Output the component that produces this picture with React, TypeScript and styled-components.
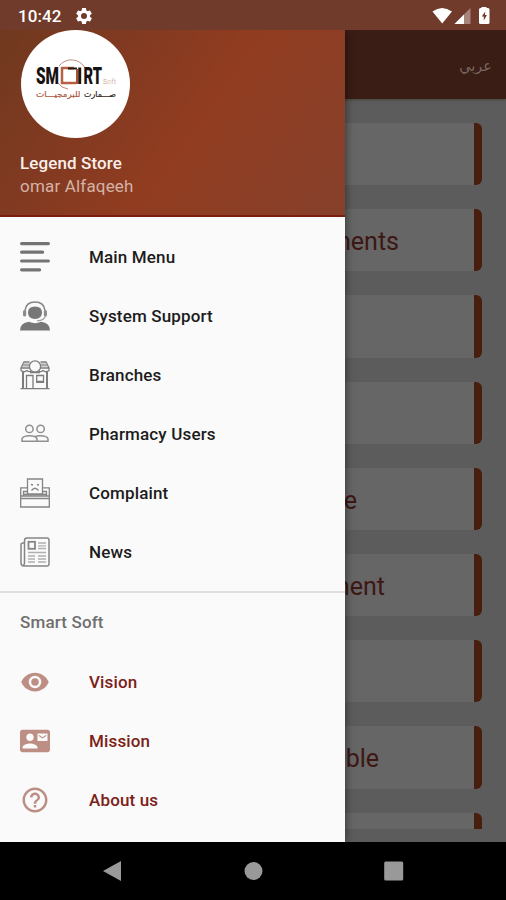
import React from "react";
import styled, { createGlobalStyle } from "styled-components";

const GlobalStyle = createGlobalStyle`
  * { box-sizing: border-box; }
  body { margin: 0; background: #000; font-family: Roboto, "Liberation Sans", sans-serif; }
`;

const Phone = styled.div`
  width: 506px;
  height: 900px;
  display: flex;
  flex-direction: column;
  overflow: hidden;
`;

const StatusBar = styled.header`
  height: 30px;
  flex: none;
  display: flex;
  align-items: center;
  padding: 2px 15px 0 18px;
  background: #703b2a;
  color: #fff;
`;

const Clock = styled.span`
  width: 56px;
  font-size: 17px;
  font-weight: 500;
  line-height: 20px;
  letter-spacing: 0.05px;
`;

const StatusIcons = styled.div`
  margin-left: auto;
  display: flex;
  align-items: center;
`;

const Screen = styled.main`
  position: relative;
  height: 812px;
  flex: none;
  display: flex;
  flex-direction: column;
  background: #5c5c5c;
  overflow: hidden;
`;

const AppBar = styled.div`
  height: 69px;
  flex: none;
  display: flex;
  align-items: center;
  justify-content: flex-end;
  padding: 2px 14px 0 0;
  background: #3a1d14;
  color: #766763;
  box-shadow: 0 1px 3px #46463c;
  font-family: "DejaVu Sans", sans-serif;
  font-size: 14.5px;
`;

const CardList = styled.div`
  display: flex;
  flex-direction: column;
  gap: 24px;
  height: 730px;
  padding: 24px 24px 0 24px;
  overflow: hidden;
`;

const Card = styled.div<{ $inset: number }>`
  height: 62.2px;
  flex: none;
  display: flex;
  align-items: center;
  justify-content: flex-end;
  padding: 3px ${(p) => p.$inset}px 0 0;
  border-right: 8px solid #481e0e;
  border-radius: 2px 6px 6px 2px;
  background: #666;
  color: #3d1714;
  font-size: 25px;
  white-space: nowrap;
`;

const Drawer = styled.aside`
  position: absolute;
  inset: 0 auto 0 0;
  width: 345px;
  background: #fafafa;
  box-shadow: 0 0 9px rgba(0, 0, 0, 0.55);
`;

const DrawerHeader = styled.div`
  height: 187px;
  padding: 0 20px;
  background: linear-gradient(125deg, #70391f 0%, #823a21 30%, #913c20 55%, #86402b 100%);
  border-bottom: 2px solid #7a1f10;
`;

const Avatar = styled.div`
  width: 109px;
  height: 108px;
  margin-left: 1px;
  border-radius: 50%;
  background: #fff;
`;

const StoreName = styled.div`
  margin-top: 14px;
  font-size: 17px;
  font-weight: 500;
  line-height: 23px;
  letter-spacing: 0.1px;
  color: #fbefeb;
`;

const UserName = styled.div`
  font-size: 17px;
  line-height: 23px;
  letter-spacing: 0.18px;
  color: #d5b2a6;
`;

const Menu = styled.nav<{ $top: number }>`
  padding-top: ${(p) => p.$top}px;
`;

const MenuItem = styled.div<{ $tone: string }>`
  height: 59.1px;
  display: grid;
  grid-template-columns: 30px 1fr;
  column-gap: 39px;
  align-items: center;
  padding-left: 20px;
  color: ${(p) => p.$tone};
  font-size: 17px;
  font-weight: 500;
  letter-spacing: 0.15px;

  svg { display: block; }
`;

const Divider = styled.hr`
  height: 2px;
  margin: 9px 0 0;
  border: 0;
  background: #dedede;
`;

const SectionTitle = styled.div`
  padding: 18px 20px 0;
  font-size: 17px;
  font-weight: 500;
  line-height: 23px;
  letter-spacing: 0.15px;
  color: #6f6f6f;
`;

const NavBar = styled.footer`
  height: 58px;
  flex: none;
  display: grid;
  grid-template-columns: repeat(3, 140.5px);
  justify-content: center;
  justify-items: center;
  align-items: center;
  background: #000;
`;

const Gear = () => (
  <svg width="20" height="20" viewBox="0 0 24 24" fill="#fff">
    <path d="M19.14 12.94c.04-.3.06-.61.06-.94 0-.32-.02-.64-.07-.94l2.03-1.58a.49.49 0 0 0 .12-.61l-1.92-3.32a.49.49 0 0 0-.59-.22l-2.39.96a7 7 0 0 0-1.62-.94l-.36-2.54a.48.48 0 0 0-.48-.41h-3.84a.47.47 0 0 0-.47.41l-.36 2.54c-.59.24-1.13.57-1.62.94l-2.39-.96a.48.48 0 0 0-.59.22L2.74 8.87a.48.48 0 0 0 .12.61l2.03 1.58a6 6 0 0 0-.02 1.88l-2.03 1.58a.49.49 0 0 0-.12.61l1.92 3.32c.12.22.37.29.59.22l2.39-.96c.5.38 1.03.7 1.62.94l.36 2.54c.05.24.24.41.48.41h3.84c.24 0 .44-.17.47-.41l.36-2.54a7 7 0 0 0 1.62-.94l2.39.96c.22.08.47 0 .59-.22l1.92-3.32a.47.47 0 0 0-.12-.61zM12 15.6a3.6 3.6 0 1 1 0-7.2 3.6 3.6 0 0 1 0 7.2" />
  </svg>
);

const Signals = () => (
  <svg width="60" height="20" viewBox="0 0 60 20" fill="#fff">
    <path d="M1.500 5.400Q11 -1.600 21 5.400L11.200 17.500Z" />
    <path d="M23.500 18L39.500 2V18Z" fillOpacity=".38" />
    <path d="M23.500 18L33 8.500V18Z" />
    <path d="M50.500 2V1h5v1H57q1.500 0 1.500 1.500v13Q58.500 18 57 18h-7.500Q48 18 48 16.500v-13Q48 2 49.500 2z" />
    <path d="M54.200 5.500l-3.400 5h2V14.500l3.100-5.500h-1.900z" fill="#703b2a" />
  </svg>
);

const SmartLogo = () => (
  <svg width="109" height="108" viewBox="0 0 109 108">
    <g fill="none" stroke="#c08d80" strokeWidth="1">
      <path d="M38 36A15.500 15.500 0 0 1 64 38" />
      <path d="M37 53Q40 58 47 59" />
    </g>
    <text x="15" y="54" fontFamily="Roboto, sans-serif" fontSize="23.500" fontWeight="900" fill="#171313" textLength="23" lengthAdjust="spacingAndGlyphs">SM</text>
    <path d="M53 38H41V53H55" fill="none" stroke="#b75f42" strokeWidth="2.500" />
    <path d="M47 38.500H56" fill="none" stroke="#1e1714" strokeWidth="2" />
    <path d="M56 39V54" fill="none" stroke="#b04f30" strokeWidth="2" />
    <path d="M58.700 37.500V54" fill="none" stroke="#1e1714" strokeWidth="3" />
    <text x="62.500" y="54" fontFamily="Roboto, sans-serif" fontSize="23.500" fontWeight="900" fill="#171313" textLength="18.500" lengthAdjust="spacingAndGlyphs">RT</text>
    <text x="82" y="53.500" fontFamily="Roboto, sans-serif" fontSize="8" fontWeight="300" fill="#c4917f" textLength="13" lengthAdjust="spacingAndGlyphs">Soft</text>
    <text x="95" y="67" direction="rtl" fontFamily="DejaVu Sans, sans-serif" fontSize="8.500" textLength="32" lengthAdjust="spacingAndGlyphs" fill="#2e2522" stroke="#2e2522" strokeWidth="0.200">صـــمارت</text>
    <text x="59.500" y="67" direction="rtl" fontFamily="DejaVu Sans, sans-serif" fontSize="8.500" textLength="44.500" lengthAdjust="spacingAndGlyphs" fill="#ad5a42" stroke="#ad5a42" strokeWidth="0.200">للبرمجيـــات</text>
  </svg>
);

const Lines = () => (
  <svg width="30" height="30" viewBox="0 0 30 30" stroke="#747474" strokeWidth="3.200" strokeLinecap="round">
    <path d="M1.600 1.600h26.800M1.600 10.200h21M1.600 19h26.800M1.600 27.800h18" />
  </svg>
);

const Agent = () => (
  <svg width="30" height="30" viewBox="0 0 30 30" fill="#777">
    <path d="M0 29.500Q0 22 9 20.800Q15 23.500 21 20.800Q30 22 30 29.500Z" />
    <path d="M8 11.500Q8 5.500 15 5.500T22 11.500Q22 18 15 18T8 11.500Z" />
    <path d="M5 9.500Q6 1 15 1T25 9.500" fill="none" stroke="#858585" strokeWidth="1.600" />
    <rect x="3" y="9" width="3.200" height="6.500" rx="1.500" fill="#8c8c8c" />
    <rect x="23.800" y="9" width="3.200" height="6.500" rx="1.500" fill="#8c8c8c" />
    <path d="M25.500 15Q24.500 19.500 17 19.800" fill="none" stroke="#a2a2a2" strokeWidth="1.200" />
  </svg>
);

const Shop = () => (
  <svg width="30" height="30" viewBox="0 0 30 30" fill="none" stroke="#7c7c7c" strokeWidth="1.300">
    <path d="M9.500 2H4L1 8v2.500q3 2.500 6 0q2 1.800 4.500 .500M20.500 2H26l3 6v2.500q-3 2.500-6 0q-2 1.800-4.500 .500M1 8h9M20 8h9" />
    <path d="M3 5h6.500M20.500 5H27" strokeWidth="3" stroke="#aaa" />
    <circle cx="15" cy="6.500" r="5.600" />
    <path d="M3 11.500V28M27 11.500V28" strokeWidth="2" />
    <path d="M10 12.500h10M0.500 28.700h29" />
    <path d="M6.500 28V15.500h6.500V28M16.700 15.500h6.800v6h-6.800zM16 22.300h8.200" />
  </svg>
);

const Users = () => (
  <svg width="30" height="30" viewBox="0 0 30 30" fill="none" stroke="#8f8f8f" strokeWidth="1.500">
    <circle cx="9.400" cy="9.900" r="3.700" />
    <circle cx="20.600" cy="9.900" r="3.700" />
    <path d="M2 22.300v-2.500Q3 16.800 9.500 16.800T17 19.800V22.300ZM14.500 17.800Q17 16.800 20.500 16.800Q27 16.800 28 19.800V22.300H17" />
  </svg>
);

const ComplaintBox = () => (
  <svg width="30" height="30" viewBox="0 0 30 30" fill="none" stroke="#858585" strokeWidth="1.300">
    <path d="M7 9.800H0.700V29H29.300V9.800H23M1 18H29M1 20.500H29M3.500 17.500V13.500H7M26.500 17.500V13.500H23" />
    <path d="M3.500 16.500H26.500" strokeWidth="1.800" />
    <path d="M7.500 16V1H22.500V16Z" fill="#fafafa" />
    <path d="M11.500 12.500Q15 8 18.500 12.500M11 6.500l2 .500M19 6.500l-2 .500" />
  </svg>
);

const Newspaper = () => (
  <svg width="30" height="30" viewBox="0 0 30 30" fill="none" stroke="#858585" strokeWidth="1.500">
    <path d="M4.500 6H3Q1 6 1 8V26Q1 29 4 29H27Q29 29 29 27V3Q29 1 27 1H7Q4.500 1 4.500 3.500V26Q4.500 28 3 28.500" />
    <rect x="8.500" y="4.800" width="6.500" height="7" strokeWidth="1.800" />
    <path d="M18 6h8M18 8.800h8M18 11.500h8M8 15.500h18M8 19h7M18 19h8M8 22h7M18 22h8M8 25h7M18 25h8" stroke="#b0b0b0" strokeWidth="1.300" />
  </svg>
);

const Eye = () => (
  <svg width="30" height="30" viewBox="0 0 24 24" fill="#bd8f84">
    <path d="M12 4.500C7 4.500 2.730 7.610 1 12c1.730 4.390 6 7.500 11 7.500s9.270-3.110 11-7.500c-1.730-4.390-6-7.500-11-7.500M12 17a5 5 0 1 1 0-10 5 5 0 0 1 0 10m0-8a3 3 0 1 0 0 6 3 3 0 0 0 0-6" />
  </svg>
);

const ContactMail = () => (
  <svg width="30" height="30" viewBox="0 0 24 24" fill="#bd8f84">
    <path d="M21 8V7l-3 2-3-2v1l3 2zm1-5H2C.9 3 0 3.900 0 5v14c0 1.100.9 2 2 2h20c1.100 0 1.990-.9 1.990-2L24 5c0-1.100-.9-2-2-2M8 6c1.660 0 3 1.340 3 3s-1.340 3-3 3-3-1.340-3-3 1.340-3 3-3m6 12H2v-1c0-2 4-3.100 6-3.100s6 1.100 6 3.100zm8-6h-8V6h8z" />
  </svg>
);

const Help = () => (
  <svg width="30" height="30" viewBox="0 0 24 24" fill="#bd8f84">
    <path d="M11 18h2v-2h-2zm1-16C6.480 2 2 6.480 2 12s4.480 10 10 10 10-4.480 10-10S17.520 2 12 2m0 18c-4.410 0-8-3.590-8-8s3.590-8 8-8 8 3.590 8 8-3.590 8-8 8m0-14c-2.210 0-4 1.790-4 4h2c0-1.100.9-2 2-2s2 .9 2 2c0 2-3 1.750-3 5h2c0-2.250 3-2.500 3-5 0-2.210-1.790-4-4-4" />
  </svg>
);

const cards = [
  { label: "", inset: 0 },
  { label: "ments", inset: 75 },
  { label: "", inset: 0 },
  { label: "", inset: 0 },
  { label: "e", inset: 117 },
  { label: "ment", inset: 89 },
  { label: "", inset: 0 },
  { label: "ble", inset: 95 },
  { label: "", inset: 0 },
];

const mainItems = [
  { label: "Main Menu", Icon: Lines },
  { label: "System Support", Icon: Agent },
  { label: "Branches", Icon: Shop },
  { label: "Pharmacy Users", Icon: Users },
  { label: "Complaint", Icon: ComplaintBox },
  { label: "News", Icon: Newspaper },
];

const companyItems = [
  { label: "Vision", Icon: Eye },
  { label: "Mission", Icon: ContactMail },
  { label: "About us", Icon: Help },
];

export default function App() {
  return (
    <>
      <GlobalStyle />
      <Phone>
        <StatusBar>
          <Clock>10:42</Clock>
          <Gear />
          <StatusIcons>
            <Signals />
          </StatusIcons>
        </StatusBar>
        <Screen>
          <AppBar>عربي</AppBar>
          <CardList>
            {cards.map((card, i) => (
              <Card key={i} $inset={card.inset}>{card.label}</Card>
            ))}
          </CardList>
          <Drawer>
            <DrawerHeader>
              <Avatar>
                <SmartLogo />
              </Avatar>
              <StoreName>Legend Store</StoreName>
              <UserName>omar Alfaqeeh</UserName>
            </DrawerHeader>
            <Menu $top={10}>
              {mainItems.map(({ label, Icon }) => (
                <MenuItem key={label} $tone="#1c1c1c">
                  <Icon />
                  {label}
                </MenuItem>
              ))}
            </Menu>
            <Divider />
            <SectionTitle>Smart Soft</SectionTitle>
            <Menu $top={18.5}>
              {companyItems.map(({ label, Icon }) => (
                <MenuItem key={label} $tone="#7c2117">
                  <Icon />
                  {label}
                </MenuItem>
              ))}
            </Menu>
          </Drawer>
        </Screen>
        <NavBar>
          <svg width="20" height="22" viewBox="0 0 20 22" fill="#999">
            <path d="M0 11L18 1V21Z" />
          </svg>
          <svg width="20" height="20" viewBox="0 0 20 20" fill="#999">
            <circle cx="10.500" cy="10" r="9" />
          </svg>
          <svg width="20" height="20" viewBox="0 0 20 20" fill="#999">
            <rect x="0.200" y="0.500" width="19" height="19" rx="1.500" />
          </svg>
        </NavBar>
      </Phone>
    </>
  );
}
